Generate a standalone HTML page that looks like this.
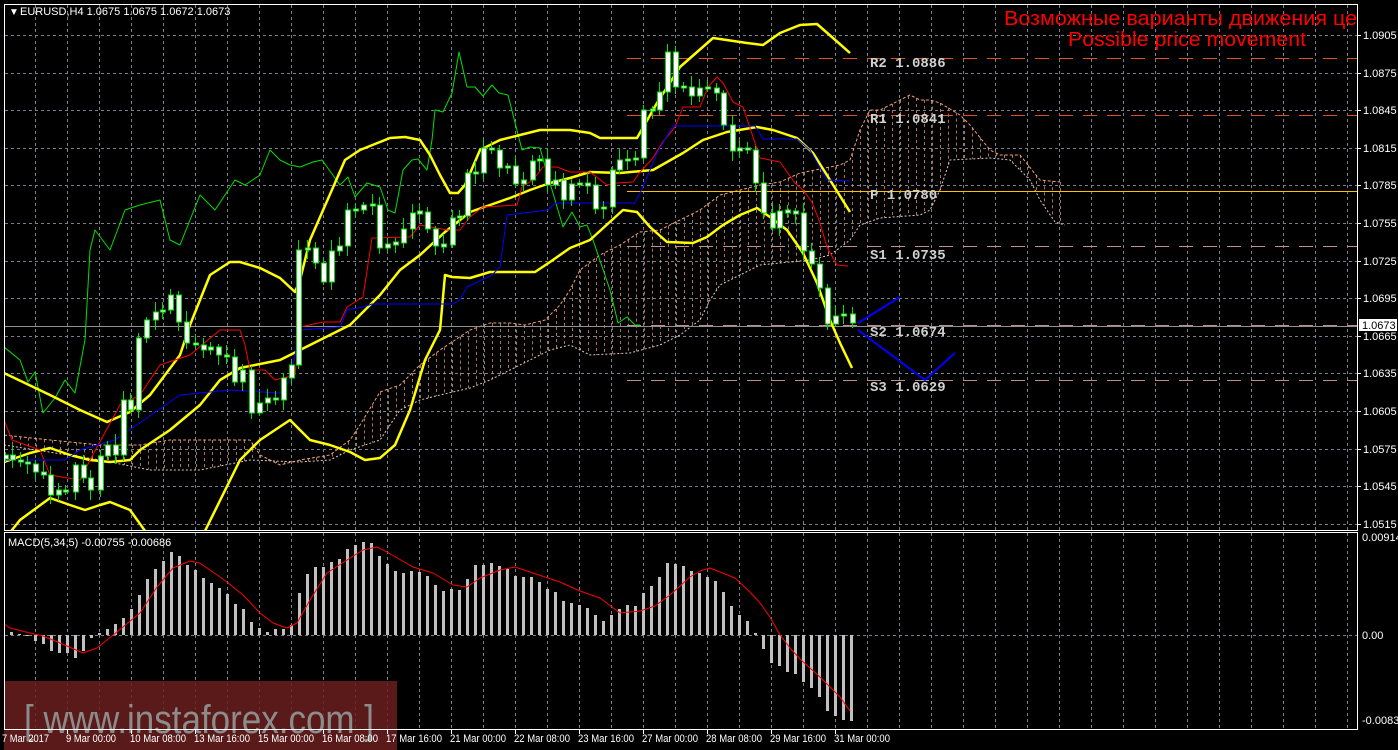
<!DOCTYPE html>
<html><head><meta charset="utf-8">
<style>
html,body{margin:0;padding:0;background:#000;width:1398px;height:750px;overflow:hidden}
svg{display:block}
</style></head>
<body>
<svg id="s" width="1398" height="750" xmlns="http://www.w3.org/2000/svg" style="font-family:'Liberation Sans',sans-serif">
<defs>
<clipPath id="cm"><rect x="5" y="5" width="1352" height="525"/></clipPath>
<clipPath id="cd"><rect x="5" y="533" width="1352" height="196"/></clipPath>
</defs>
<g id="grid"></g>
<g id="main" clip-path="url(#cm)"></g>
<g id="macd" clip-path="url(#cd)"></g>
<rect x="4" y="681" width="393" height="69" fill="#6a1e1e" opacity="0.85"/>
<text x="24" y="733" font-size="40" fill="#8c8c8c" textLength="350" lengthAdjust="spacingAndGlyphs">[  www.instaforex.com  ]</text>
<g id="axis"></g>
<rect x="4.5" y="4.5" width="1353" height="526" fill="none" stroke="#fff"/>
<rect x="4.5" y="532.5" width="1353" height="197" fill="none" stroke="#fff"/>
<text x="9" y="15" font-size="10" fill="#fff">▼</text>
<text x="20" y="15" font-size="11" fill="#fff">EURUSD,H4  1.0675 1.0675 1.0672 1.0673</text>
<text x="8" y="546" font-size="11" fill="#fff">MACD(5,34,5) -0.00755 -0.00686</text>
<g clip-path="url(#cm)">
<text x="1004" y="25" font-size="20" fill="#ff0000" textLength="365" lengthAdjust="spacingAndGlyphs">Возможные варианты движения цен</text>
<text x="1068" y="46" font-size="20" fill="#ff0000" textLength="238" lengthAdjust="spacingAndGlyphs">Possible price movement</text>
</g>
</svg>
<script>
const NS="http://www.w3.org/2000/svg";
function el(p,t,a){const e=document.createElementNS(NS,t);for(const k in a)e.setAttribute(k,a[k]);document.getElementById(p).appendChild(e);return e;}
function pl(p,pts,col,w,extra){const a={points:pts.map(q=>q.join(',')).join(' '),fill:'none',stroke:col,'stroke-width':w,'stroke-linejoin':'round'};Object.assign(a,extra||{});return el(p,'polyline',a);}
function interp(pts,x){if(x<=pts[0][0])return pts[0][1];for(let i=1;i<pts.length;i++){if(x<=pts[i][0]){const a=pts[i-1],b=pts[i];return a[1]+(b[1]-a[1])*(x-a[0])/(b[0]-a[0]);}}return pts[pts.length-1][1];}
const hy=[35,72.6,110.2,147.8,185.4,223,260.6,298.2,335.8,373.4,411,448.6,486.2,523.8];
const hl=['1.0905','1.0875','1.0845','1.0815','1.0785','1.0755','1.0725','1.0695','1.0665','1.0635','1.0605','1.0575','1.0545','1.0515'];
hy.forEach((y,i)=>{el('grid','line',{x1:5,x2:1357,y1:Math.round(y)+.5,y2:Math.round(y)+.5,stroke:'#77808c','stroke-dasharray':'3,3'});
 el('axis','line',{x1:1357,x2:1361,y1:Math.round(y)+.5,y2:Math.round(y)+.5,stroke:'#fff'});
 const t=el('axis','text',{x:1363,y:Math.round(y)+4,'font-size':11,fill:'#fff'});t.textContent=hl[i];});
for(let x=35;x<1357;x+=32){el('grid','line',{x1:x+.5,x2:x+.5,y1:5,y2:530,stroke:'#77808c','stroke-dasharray':'3,3'});el('grid','line',{x1:x+.5,x2:x+.5,y1:533,y2:729,stroke:'#77808c','stroke-dasharray':'3,3'});}
el('grid','line',{x1:5,x2:1357,y1:635.5,y2:635.5,stroke:'#77808c','stroke-dasharray':'3,3'});
[[541,'0.00914'],[639,'0.00'],[724,'-0.00835']].forEach(a=>{const t=el('axis','text',{x:1362,y:a[0],'font-size':11,fill:'#fff'});t.textContent=a[1];});
el('axis','rect',{x:1359,y:319,width:38,height:12,fill:'#fff'});
const bt=el('axis','text',{x:1362,y:329,'font-size':11,fill:'#000'});bt.textContent='1.0673';
const tl=['7 Mar 2017','9 Mar 00:00','10 Mar 08:00','13 Mar 16:00','15 Mar 00:00','16 Mar 08:00','17 Mar 16:00','21 Mar 00:00','22 Mar 08:00','23 Mar 16:00','27 Mar 00:00','28 Mar 08:00','29 Mar 16:00','31 Mar 00:00'];
tl.forEach((s,i)=>{const x=i==0?2:66+64*(i-1);const w=s.length>=12?56:(s.length==11?50:47);
 const t=el('axis','text',{x:x,y:742,'font-size':11,fill:'#fff',textLength:w,lengthAdjust:'spacingAndGlyphs'});t.textContent=s;
 if(i>0)el('axis','line',{x1:x+1.5,x2:x+1.5,y1:730,y2:734,stroke:'#fff'});});
const cu=[[4,435],[50,440],[100,445],[140,445],[170,440],[250,440],[260,455],[280,465],[300,460],[330,455],[350,440],[360,425],[380,392],[400,385],[420,365],[440,350],[455,340],[470,330],[490,323],[510,323],[525,325],[545,320],[560,305],[570,290],[580,270],[600,255],[620,245],[640,232],[660,230],[680,220],[700,210],[720,195],[740,190],[760,185],[780,182],[800,173],[840,165],[850,160],[860,130],[870,110],[880,110],[900,100],[910,95],[920,100],[930,100],[940,103],[960,115],[970,125],[990,150],[1000,155],[1020,155],[1040,180],[1060,182]];
const cl=[[4,445],[100,460],[150,470],[200,470],[250,460],[300,462],[330,460],[350,450],[380,440],[400,410],[420,400],[440,395],[470,388],[490,380],[510,370],[530,360],[550,350],[570,345],[590,355],[630,353],[660,345],[680,335],[700,320],[710,300],[720,285],[740,275],[760,265],[780,263],[810,260],[830,255],[850,240],[860,225],[880,218],[920,215],[930,210],[940,190],[950,160],[990,158],[1010,160],[1030,180],[1040,200],[1055,222],[1065,225]];
for(let x=12;x<1062;x+=8){const a=interp(cu,x),b=interp(cl,x);el('main','line',{x1:x+.5,x2:x+.5,y1:Math.min(a,b),y2:Math.max(a,b),stroke:'#d89068','stroke-dasharray':'3,3','stroke-opacity':0.8});}
pl('main',cu,'#f0a070',1,{'stroke-dasharray':'3,2'});
pl('main',cl,'#e0c8c0',1,{'stroke-dasharray':'2,2'});
[[58,'#e05020'],[115,'#e05020'],[246,'#c09088'],[325,'#c09088'],[380,'#c09088']].forEach(a=>el('main','line',{x1:627,x2:1357,y1:a[0]+.5,y2:a[0]+.5,stroke:a[1],'stroke-dasharray':'14,10'}));
el('main','line',{x1:5,x2:1357,y1:326.5,y2:326.5,stroke:'#909090'});
el('main','line',{x1:627,x2:1357,y1:191.5,y2:191.5,stroke:'#ffc000'});
[[67,'R2 1.0886'],[123,'R1 1.0841'],[199,'P 1.0780'],[259,'S1 1.0735'],[336,'S2 1.0674'],[391,'S3 1.0629']].forEach(a=>{const t=el('main','text',{x:870,y:a[0],'font-size':14,'font-weight':'bold',fill:'#d0d0d0',style:"font-family:'Liberation Mono',monospace"});t.textContent=a[1];});
pl('main',[[4,347],[20,360],[28,382],[35,372],[43,413],[55,398],[65,380],[75,393],[85,340],[90,250],[95,230],[110,250],[125,210],[140,205],[160,200],[170,240],[180,245],[200,195],[215,210],[235,180],[245,185],[260,175],[270,150],[280,160],[290,165],[300,167],[313,162],[322,160],[340,185],[348,177],[355,197],[367,183],[380,187],[388,210],[395,213],[403,170],[412,160],[418,159],[427,170],[432,140],[435,110],[443,112],[452,93],[459,52],[467,87],[475,87],[483,96],[492,85],[499,93],[508,95],[522,150],[530,147],[540,148],[547,173],[563,227],[572,212],[580,227],[587,225],[593,240],[610,290],[618,323],[627,317],[635,325],[640,325]],'#00e000',1);
const Y='#ffff00';
pl('main',[[4,373],[50,395],[80,410],[107,422],[130,412],[150,395],[180,355],[190,325],[210,275],[230,262],[240,262],[260,268],[280,278],[295,292],[300,280],[310,240],[345,160],[360,150],[390,138],[405,137],[420,140],[430,155],[440,175],[450,193],[458,193],[465,185],[480,150],[500,140],[520,135],[540,130],[570,130],[590,133],[600,138],[637,138],[657,103],[680,67],[713,38],[747,43],[763,45],[780,33],[800,25],[817,24],[833,38],[850,53]],Y,2.5);
pl('main',[[4,462],[30,453],[50,448],[70,455],[90,460],[110,462],[130,460],[140,450],[170,430],[200,405],[220,380],[240,368],[260,364],[280,360],[300,350],[350,325],[380,295],[400,270],[420,255],[445,232],[470,212],[490,205],[510,198],[530,190],[550,183],[570,178],[590,172],[620,173],[653,170],[683,153],[703,140],[727,132],[757,127],[773,130],[797,138],[813,153],[830,180],[850,212]],Y,2.5);
pl('main',[[8,535],[20,520],[50,498],[70,505],[85,510],[100,505],[110,502],[130,510],[148,535]],Y,2.5);
pl('main',[[203,535],[240,460],[260,440],[290,420],[310,440],[330,445],[350,452],[365,460],[380,458],[395,445],[410,410],[425,360],[440,330],[445,275],[452,277],[470,278],[490,272],[535,272],[550,262],[570,248],[590,240],[623,210],[637,212],[650,227],[667,242],[693,243],[707,237],[723,225],[740,215],[757,208],[770,217],[787,230],[803,253],[817,283],[830,320],[840,343],[852,368]],Y,2.5);
pl('main',[[4,420],[12,440],[40,450],[50,475],[80,480],[90,460],[120,405],[140,395],[160,365],[190,355],[220,330],[240,330],[245,345],[250,370],[265,370],[275,380],[295,375],[300,327],[323,322],[340,322],[347,307],[363,297],[372,238],[410,237],[420,225],[447,230],[460,230],[470,217],[483,207],[517,205],[522,187],[533,180],[543,167],[557,167],[570,172],[590,172],[607,185],[617,183],[633,182],[640,172],[653,158],[662,143],[675,127],[683,107],[700,107],[708,87],[717,77],[723,83],[733,102],[743,107],[760,158],[780,162],[795,183],[803,190],[812,202],[820,223],[827,247],[837,265],[848,266]],'#ff0000',1);
pl('main',[[4,460],[65,460],[80,450],[115,440],[180,395],[230,390],[280,393],[290,380],[300,330],[340,327],[347,310],[363,307],[372,304],[453,304],[460,300],[467,287],[492,275],[500,267],[507,215],[548,210],[555,203],[635,203],[643,187],[657,153],[673,126],[755,126],[763,139],[797,139],[810,150],[827,180],[850,181]],'#0000ff',1);
const C=[[5,455],[12,460],[20,462],[27,464],[35,472],[43,475],[50,495],[58,490],[65,492],[75,465],[83,478],[90,490],[100,456],[107,445],[115,455],[123,400],[130,410],[138,338],[146,320],[155,312],[162,310],[170,295],[178,322],[186,343],[195,345],[203,350],[210,347],[218,355],[226,357],[234,382],[242,370],[251,413],[259,403],[267,398],[275,400],[283,378],[291,365],[298,250],[307,248],[315,263],[323,282],[331,251],[339,246],[347,210],[355,210],[363,205],[372,205],[379,248],[387,244],[395,243],[403,229],[412,213],[419,212],[427,229],[435,246],[443,245],[452,218],[459,216],[467,173],[475,173],[483,148],[491,150],[499,168],[507,166],[515,184],[523,180],[532,161],[539,159],[547,185],[555,180],[563,200],[571,184],[579,184],[587,185],[595,209],[603,207],[612,170],[619,160],[627,160],[635,158],[643,110],[652,110],[659,92],[667,52],[675,87],[683,87],[691,96],[699,88],[707,88],[716,93],[723,125],[732,151],[739,148],[747,150],[755,183],[763,213],[772,228],[779,211],[787,212],[795,213],[803,251],[811,264],[819,288],[827,324],[835,316],[843,314],[852,323]];
let prev=C[0][1]+4;
C.forEach((c,i)=>{const x=c[0],o=prev,cl=c[1];let t=Math.min(o,cl),b=Math.max(o,cl);if(b-t<2){t-=1;b+=1;}
 const wu=3+((i*7)%9),wd=3+((i*5)%8);
 el('main','line',{x1:x+.5,x2:x+.5,y1:t-wu,y2:b+wd,stroke:'#00e000'});
 el('main','rect',{x:x-1.5,y:t,width:5,height:b-t,fill:'#fff',stroke:'#00e000'});
 prev=cl;});
pl('main',[[858,323],[900,297]],'#0000ff',2);
pl('main',[[858,330],[925,380],[955,353]],'#0000ff',2);
const H=[[3,6],[11,3],[19,1],[27,-1],[35,-6],[43,-9],[51,-16],[59,-18],[67,-18],[75,-23],[83,-16],[91,-3],[99,2],[107,6],[115,11],[123,17],[131,26],[139,40],[147,56],[155,66],[163,74],[171,83],[179,79],[187,70],[195,65],[203,57],[211,52],[219,47],[227,41],[235,31],[243,26],[251,13],[259,7],[267,3],[275,6],[283,6],[291,10],[299,42],[307,61],[315,68],[323,68],[331,73],[339,76],[347,86],[355,90],[363,93],[371,92],[379,79],[387,71],[395,64],[403,62],[411,64],[419,63],[427,59],[435,50],[443,44],[451,46],[459,45],[467,56],[475,70],[483,70],[491,72],[499,69],[507,66],[515,59],[523,58],[531,58],[539,53],[547,46],[555,43],[563,34],[571,32],[579,30],[587,27],[595,20],[603,14],[611,20],[619,26],[627,30],[635,29],[643,42],[651,49],[659,58],[667,72],[675,71],[683,69],[691,64],[699,62],[707,58],[715,54],[723,43],[731,29],[739,20],[747,14],[755,2],[763,-14],[771,-28],[779,-31],[787,-37],[795,-39],[803,-47],[811,-53],[819,-62],[827,-76],[835,-81],[843,-85],[851,-86]];
H.forEach(h=>{const y=h[1]>0?635-h[1]:635;el('macd','rect',{x:h[0]-1,y:y,width:3,height:Math.abs(h[1])||1,fill:'#c0c0c0'});});
pl('macd',[[3,623],[10,628],[30,633],[43,636],[60,643],[83,653],[97,648],[123,627],[140,613],[157,587],[173,568],[190,561],[200,563],[227,582],[243,595],[260,613],[273,623],[287,628],[297,623],[310,600],[327,573],[347,560],[363,550],[377,547],[387,552],[413,567],[433,573],[453,585],[467,587],[480,578],[500,570],[515,567],[530,572],[560,582],[580,591],[600,598],[620,613],[640,611],[655,606],[670,595],[690,577],[700,571],[710,568],[720,572],[735,578],[750,592],[760,603],[770,617],[780,635],[790,648],[800,659],[810,668],[820,677],[830,687],[840,697],[850,711]],'#ff0000',1);
</script>
</body></html>
